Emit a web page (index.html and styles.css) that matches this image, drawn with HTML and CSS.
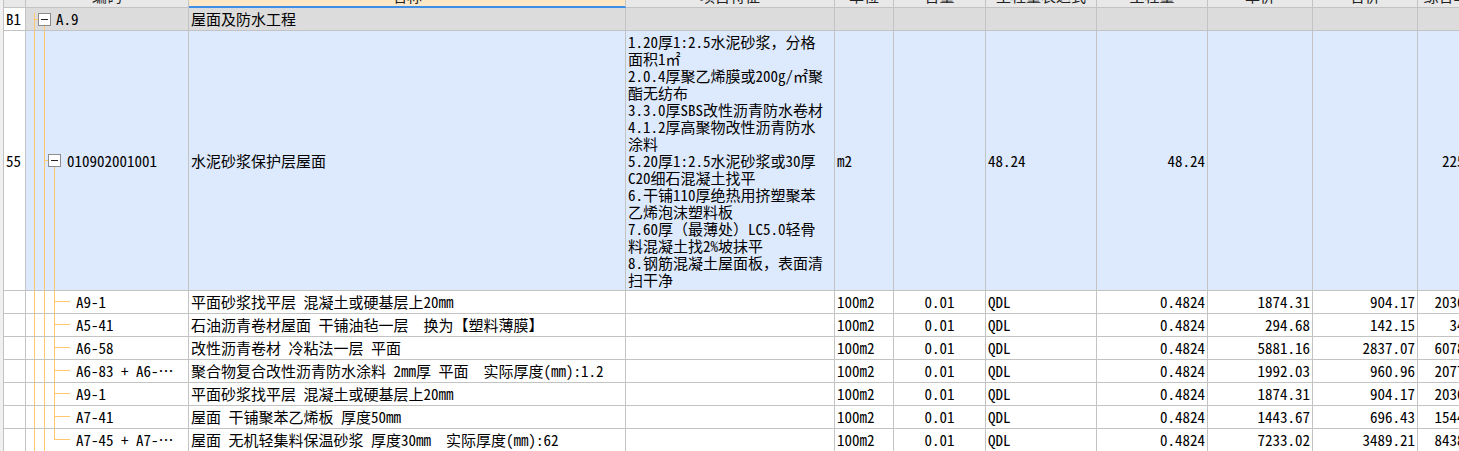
FILE: index.html
```html
<!DOCTYPE html>
<html lang="zh-CN">
<head>
<meta charset="utf-8">
<title>分部分项</title>
<link rel="stylesheet" href="styles.css">
</head>
<body>
<div class="wrap">
  <div class="table">
    <div class="row hd">
      <div class="c"></div>
      <div class="c">编码</div>
      <div class="c sel">名称</div>
      <div class="c">项目特征</div>
      <div class="c">单位</div>
      <div class="c">含量</div>
      <div class="c">工程量表达式</div>
      <div class="c">工程量</div>
      <div class="c">单价</div>
      <div class="c">合价</div>
      <div class="c">综合单价</div>
    </div>

    <div class="row grp">
      <div class="c num">B1</div>
      <div class="c tree t-grp"><span class="tg g1"></span><span class="code g1t">A.9</span></div>
      <div class="c">屋面及防水工程</div>
      <div class="c"></div>
      <div class="c"></div>
      <div class="c"></div>
      <div class="c"></div>
      <div class="c"></div>
      <div class="c"></div>
      <div class="c"></div>
      <div class="c"></div>
    </div>

    <div class="row item">
      <div class="c num">55</div>
      <div class="c tree t-item"><span class="tg g2"></span><span class="code g2t">010902001001</span></div>
      <div class="c">水泥砂浆保护层屋面</div>
      <div class="c feat">1.20厚1:2.5水泥砂浆，分格<br>面积1㎡<br>2.0.4厚聚乙烯膜或200g/㎡聚<br>酯无纺布<br>3.3.0厚SBS改性沥青防水卷材<br>4.1.2厚高聚物改性沥青防水<br>涂料<br>5.20厚1:2.5水泥砂浆或30厚<br>C20细石混凝土找平<br>6.干铺110厚绝热用挤塑聚苯<br>乙烯泡沫塑料板<br>7.60厚（最薄处）LC5.0轻骨<br>料混凝土找2%坡抹平<br>8.钢筋混凝土屋面板，表面清<br>扫干净</div>
      <div class="c">m2</div>
      <div class="c m"></div>
      <div class="c">48.24</div>
      <div class="c r">48.24</div>
      <div class="c r"></div>
      <div class="c r"></div>
      <div class="c r">225.52</div>
    </div>

    <div class="row sub">
      <div class="c num"></div>
      <div class="c tree t-sub">A9-1</div>
      <div class="c">平面砂浆找平层 混凝土或硬基层上20mm</div>
      <div class="c"></div>
      <div class="c">100m2</div>
      <div class="c m">0.01</div>
      <div class="c">QDL</div>
      <div class="c r">0.4824</div>
      <div class="c r">1874.31</div>
      <div class="c r">904.17</div>
      <div class="c r">2036.83</div>
    </div>

    <div class="row sub">
      <div class="c num"></div>
      <div class="c tree t-sub">A5-41</div>
      <div class="c">石油沥青卷材屋面 干铺油毡一层  换为【塑料薄膜】</div>
      <div class="c"></div>
      <div class="c">100m2</div>
      <div class="c m">0.01</div>
      <div class="c">QDL</div>
      <div class="c r">0.4824</div>
      <div class="c r">294.68</div>
      <div class="c r">142.15</div>
      <div class="c r">34.16</div>
    </div>

    <div class="row sub">
      <div class="c num"></div>
      <div class="c tree t-sub">A6-58</div>
      <div class="c">改性沥青卷材 冷粘法一层 平面</div>
      <div class="c"></div>
      <div class="c">100m2</div>
      <div class="c m">0.01</div>
      <div class="c">QDL</div>
      <div class="c r">0.4824</div>
      <div class="c r">5881.16</div>
      <div class="c r">2837.07</div>
      <div class="c r">6078.51</div>
    </div>

    <div class="row sub">
      <div class="c num"></div>
      <div class="c tree t-sub">A6-83 + A6-…</div>
      <div class="c">聚合物复合改性沥青防水涂料 2mm厚 平面  实际厚度(mm):1.2</div>
      <div class="c"></div>
      <div class="c">100m2</div>
      <div class="c m">0.01</div>
      <div class="c">QDL</div>
      <div class="c r">0.4824</div>
      <div class="c r">1992.03</div>
      <div class="c r">960.96</div>
      <div class="c r">2077.64</div>
    </div>

    <div class="row sub">
      <div class="c num"></div>
      <div class="c tree t-sub">A9-1</div>
      <div class="c">平面砂浆找平层 混凝土或硬基层上20mm</div>
      <div class="c"></div>
      <div class="c">100m2</div>
      <div class="c m">0.01</div>
      <div class="c">QDL</div>
      <div class="c r">0.4824</div>
      <div class="c r">1874.31</div>
      <div class="c r">904.17</div>
      <div class="c r">2036.83</div>
    </div>

    <div class="row sub">
      <div class="c num"></div>
      <div class="c tree t-sub">A7-41</div>
      <div class="c">屋面 干铺聚苯乙烯板 厚度50mm</div>
      <div class="c"></div>
      <div class="c">100m2</div>
      <div class="c m">0.01</div>
      <div class="c">QDL</div>
      <div class="c r">0.4824</div>
      <div class="c r">1443.67</div>
      <div class="c r">696.43</div>
      <div class="c r">1544.29</div>
    </div>

    <div class="row sub">
      <div class="c num"></div>
      <div class="c tree t-last">A7-45 + A7-…</div>
      <div class="c">屋面 无机轻集料保温砂浆 厚度30mm  实际厚度(mm):62</div>
      <div class="c"></div>
      <div class="c">100m2</div>
      <div class="c m">0.01</div>
      <div class="c">QDL</div>
      <div class="c r">0.4824</div>
      <div class="c r">7233.02</div>
      <div class="c r">3489.21</div>
      <div class="c r">8438.92</div>
    </div>
  </div>
</div>
</body>
</html>
```
FILE: styles.css
```css
html, body {
  margin: 0;
  padding: 0;
}
body {
  background: #f0f0f0;
  font-family: "Noto Sans Mono CJK SC", "Noto Sans CJK SC", sans-serif;
  font-size: 15px;
  color: #000;
  overflow: hidden;
}
.wrap {
  height: 451px;
  width: 1459px;
  overflow: hidden;
  padding-left: 3px;
  box-sizing: border-box;
}
.table {
  margin-top: -15px;
  border-left: 1px solid #c3c3c3;
  width: max-content;
  background: #fff;
}
.row {
  display: grid;
  grid-template-columns: 22px 163px 437px 209px 59px 92px 111px 111px 105px 105px 72px;
}
.c {
  box-sizing: border-box;
  min-height: 23px;
  border-right: 1px solid #c3c3c3;
  border-bottom: 1px solid #c3c3c3;
  padding: 0 2px;
  line-height: 22px;
  white-space: pre;
  overflow: hidden;
  display: flex;
  align-items: center;
}
.c.r { justify-content: flex-end; }
.c.m { justify-content: center; }

/* header */
.hd .c {
  background: #e8e8e8;
  justify-content: center;
  height: 23px;
  color: #222;
}
.hd .c.sel {
  background: #fde8c8;
  border-bottom: 2px solid #3f8fe8;
}

/* group row */
.grp .c { background: #dcdcdc; }
.grp .c.num { background: #fff; }

/* item row */
.item .c { background: #dde9fc; }
.item .c.num { background: #fff; }
.c.feat {
  display: block;
  line-height: 17px;
  padding: 2px 2px;
}

/* sub rows */
.sub .c { background: #fff; }

/* tree column */
.c.tree { padding-left: 0; }
.tg {
  flex: none;
  width: 13px;
  height: 13px;
  box-sizing: border-box;
  border: 1px solid #8c8c8c;
  background: #fff;
  display: flex;
  align-items: center;
  justify-content: center;
}
.tg::before {
  content: "";
  width: 7px;
  height: 1px;
  background: #222;
}
.tg.g1 { margin-left: 12px; }
.g1t { margin-left: 5px; }
.tg.g2 { margin-left: 22px; }
.g2t { margin-left: 6px; }

.grp .c.t-grp {
  background:
    linear-gradient(#ffc86e, #ffc86e) 8px 5px / 1px 100% no-repeat,
    linear-gradient(#ffc86e, #ffc86e) 8px 11px / 4px 1px no-repeat,
    linear-gradient(#ffc86e, #ffc86e) 18px 17px / 1px 100% no-repeat,
    #dcdcdc;
}
.item .c.t-item {
  background:
    linear-gradient(#ffc86e, #ffc86e) 8px 0 / 1px 100% no-repeat,
    linear-gradient(#ffc86e, #ffc86e) 18px 0 / 1px 100% no-repeat,
    linear-gradient(#ffc86e, #ffc86e) 18px 50% / 4px 1px no-repeat,
    linear-gradient(to bottom, transparent calc(50% + 7px), #ffc86e calc(50% + 7px)) 28px 0 / 1px 100% no-repeat,
    #dde9fc;
}
.sub .c.t-sub {
  padding-left: 50px;
  background:
    linear-gradient(#ffc86e, #ffc86e) 8px 0 / 1px 100% no-repeat,
    linear-gradient(#ffc86e, #ffc86e) 18px 0 / 1px 100% no-repeat,
    linear-gradient(#ffc86e, #ffc86e) 28px 0 / 1px 100% no-repeat,
    linear-gradient(#ffc86e, #ffc86e) 29px 10px / 15px 1px no-repeat,
    #fff;
}
.sub .c.t-last {
  padding-left: 50px;
  background:
    linear-gradient(#ffc86e, #ffc86e) 8px 0 / 1px 100% no-repeat,
    linear-gradient(#ffc86e, #ffc86e) 18px 0 / 1px 100% no-repeat,
    linear-gradient(#ffc86e, #ffc86e) 28px 0 / 1px 11px no-repeat,
    linear-gradient(#ffc86e, #ffc86e) 29px 10px / 15px 1px no-repeat,
    #fff;
}
```
